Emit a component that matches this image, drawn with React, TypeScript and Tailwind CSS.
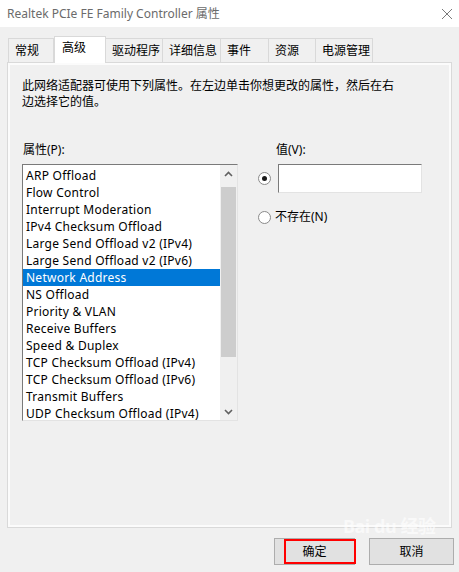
const tabs = [
  { label: "常规", w: "w-[46px]" },
  { label: "高级", w: "w-[52px]", active: true },
  { label: "驱动程序", w: "w-[58px]" },
  { label: "详细信息", w: "w-[59px]" },
  { label: "事件", w: "w-[49px]" },
  { label: "资源", w: "w-[48px]" },
  { label: "电源管理", w: "w-[58px]" },
];

const props = [
  "ARP Offload",
  "Flow Control",
  "Interrupt Moderation",
  "IPv4 Checksum Offload",
  "Large Send Offload v2 (IPv4)",
  "Large Send Offload v2 (IPv6)",
  "Network Address",
  "NS Offload",
  "Priority & VLAN",
  "Receive Buffers",
  "Speed & Duplex",
  "TCP Checksum Offload (IPv4)",
  "TCP Checksum Offload (IPv6)",
  "Transmit Buffers",
  "UDP Checksum Offload (IPv4)",
];

const Chevron = ({ up }: { up?: boolean }) => (
  <svg width="9" height="6" viewBox="0 0 9 6">
    <path
      d={up ? "M1 5 L4.5 1.5 L8 5" : "M1 1 L4.5 4.5 L8 1"}
      fill="none"
      stroke="#606060"
      strokeWidth="1.6"
    />
  </svg>
);

const Radio = ({ checked }: { checked?: boolean }) => (
  <div className="flex h-[13px] w-[13px] items-center justify-center rounded-full border border-[#8a8a8a] bg-white">
    {checked && <div className="h-[5px] w-[5px] rounded-full bg-[#1a1a1a]" />}
  </div>
);

export default function App() {
  return (
    <div className="relative h-[572px] w-[459px] overflow-hidden bg-[#f0f0f0] font-['Noto_Sans','Noto_Sans_CJK_SC',sans-serif] text-[12px] text-black">
      {/* title bar */}
      <div className="flex h-[27px] items-center justify-between bg-white pl-[7px] pr-[6px]">
        <span className="text-[12px] text-[#6b6b6b]">Realtek PCIe FE Family Controller 属性</span>
        <svg width="12" height="12" viewBox="0 0 12 12">
          <path d="M1 1 L11 11 M11 1 L1 11" stroke="#7a7a7a" strokeWidth="1" />
        </svg>
      </div>

      {/* tabs */}
      <div className="relative z-10 mt-[8px] flex h-[27px] items-end pl-[8px]">
        {tabs.map((t) =>
          t.active ? (
            <div
              key={t.label}
              className={`${t.w} -mb-px flex h-[27px] items-start border border-b-0 border-[#d9d9d9] bg-white pl-[7px] pt-[3px] leading-[16px]`}
            >
              {t.label}
            </div>
          ) : (
            <div
              key={t.label}
              className={`${t.w} -ml-px flex h-[24px] items-center border border-b-0 border-[#d9d9d9] bg-[#f0f0f0] pl-[6px] first:ml-0`}
            >
              {t.label}
            </div>
          )
        )}
      </div>

      {/* panel */}
      <div className="mx-[7px] h-[466px] border border-[#d9d9d9]">
        <div className="h-full border-2 border-[#fbfbfb] pl-[12px]">
          <p className="mt-[13px] w-[380px] leading-[16px]">
            此网络适配器可使用下列属性。在左边单击你想更改的属性，然后在右边选择它的值。
          </p>

          <div className="mt-[32px] flex gap-[20px]">
            <div className="flex flex-col">
              <span className="pl-px leading-[16px]">属性(P):</span>
              <div className="mt-[6px] flex h-[257px] w-[216px] border border-t-[#7a7a7a] border-l-[#7a7a7a] border-r-[#e3e3e3] border-b-[#e3e3e3] bg-white">
                <div className="flex flex-1 flex-col pt-[2px]">
                  {props.map((p) => (
                    <div
                      key={p}
                      className={`h-[17px] whitespace-nowrap pl-[3px] leading-[17px] tracking-[0.25px] ${
                        p === "Network Address" ? "bg-[#0078d7] text-white" : ""
                      }`}
                    >
                      {p}
                    </div>
                  ))}
                </div>
                <div className="flex w-[17px] flex-col bg-[#f0f0f0]">
                  <div className="flex h-[17px] items-center justify-center">
                    <Chevron up />
                  </div>
                  <div className="mx-[1px] mt-[5px] h-[170px] bg-[#cdcdcd]" />
                  <div className="flex-1" />
                  <div className="flex h-[17px] items-center justify-center">
                    <Chevron />
                  </div>
                </div>
              </div>
            </div>

            <div className="flex flex-col">
              <span className="pl-[18px] leading-[16px]">值(V):</span>
              <div className="mt-[6px] flex items-center gap-[7px]">
                <Radio checked />
                <div className="h-[29px] w-[144px] border border-t-[#7a7a7a] border-l-[#7a7a7a] border-r-[#e3e3e3] border-b-[#e3e3e3] bg-white" />
              </div>
              <div className="mt-[16px] flex items-center gap-[4px]">
                <Radio />
                <span className="leading-[16px]">不存在(N)</span>
              </div>
            </div>
          </div>
        </div>
      </div>

      {/* buttons */}
      <div className="mt-[10px] flex gap-[14px] pl-[274px]">
        <button className="h-[27px] w-[81px] border border-[#adadad] bg-[#e1e1e1]">确定</button>
        <button className="h-[27px] w-[85px] border border-[#adadad] bg-[#e1e1e1]">取消</button>
      </div>

      {/* red highlight box */}
      <div className="absolute left-[284px] top-[539px] h-[25px] w-[72px] border-2 border-[#ff0000]" />

      {/* watermark */}
      <div className="pointer-events-none absolute left-[343px] top-[516px] text-[18px] font-bold leading-[20px] tracking-tight text-white opacity-60">
        Bai du 经验
      </div>
    </div>
  );
}
